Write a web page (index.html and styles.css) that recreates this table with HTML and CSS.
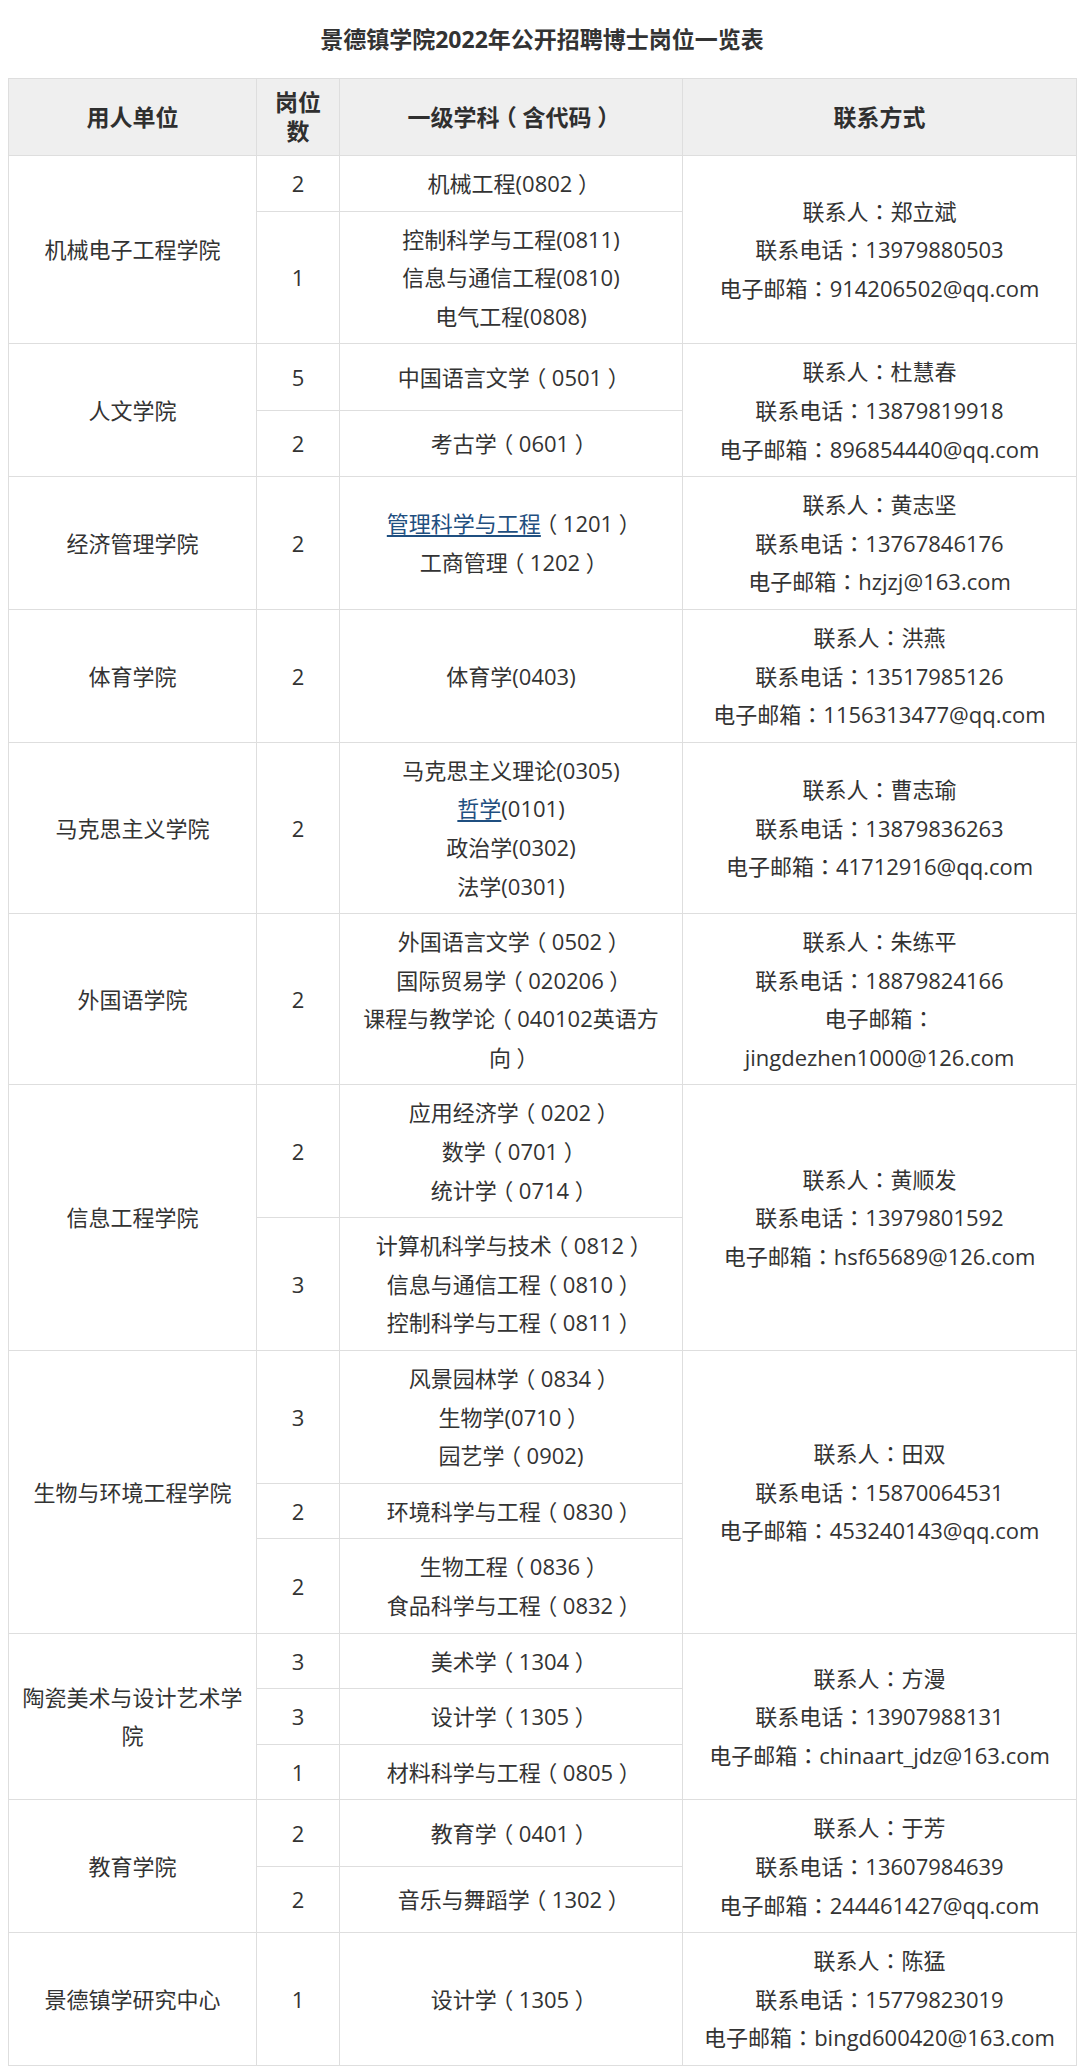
FILE: index.html
```html
<!DOCTYPE html>
<html lang="zh-CN">
<head>
<meta charset="utf-8">
<title>景德镇学院2022年公开招聘博士岗位一览表</title>
<link rel="stylesheet" href="styles.css">
</head>
<body>
<div class="page">
  <h1 class="title">景德镇学院2022年公开招聘博士岗位一览表</h1>
  <table class="jobs">
    <colgroup>
      <col class="c-unit">
      <col class="c-num">
      <col class="c-subj">
      <col class="c-contact">
    </colgroup>
    <thead>
      <tr>
        <th>用人单位</th>
        <th>岗位数</th>
        <th>一级学科<span class="bk">（</span>含代码<span class="bk">）</span></th>
        <th>联系方式</th>
      </tr>
    </thead>
    <tbody>
      <tr>
        <td rowspan="2">机械电子工程学院</td>
        <td>2</td>
        <td>机械工程(0802<span class="bk">）</span></td>
        <td rowspan="2">联系人<span class="cl" lang="zh-TW">：</span>郑立斌<br>联系电话<span class="cl" lang="zh-TW">：</span>13979880503<br>电子邮箱<span class="cl" lang="zh-TW">：</span>914206502@qq.com</td>
      </tr>
      <tr>
        <td>1</td>
        <td>控制科学与工程(0811)<br>信息与通信工程(0810)<br>电气工程(0808)</td>
      </tr>

      <tr>
        <td rowspan="2">人文学院</td>
        <td>5</td>
        <td>中国语言文学<span class="bk">（</span>0501<span class="bk">）</span></td>
        <td rowspan="2">联系人<span class="cl" lang="zh-TW">：</span>杜慧春<br>联系电话<span class="cl" lang="zh-TW">：</span>13879819918<br>电子邮箱<span class="cl" lang="zh-TW">：</span>896854440@qq.com</td>
      </tr>
      <tr>
        <td>2</td>
        <td>考古学<span class="bk">（</span>0601<span class="bk">）</span></td>
      </tr>

      <tr>
        <td>经济管理学院</td>
        <td>2</td>
        <td><a class="link" href="#">管理科学与工程</a><span class="bk">（</span>1201<span class="bk">）</span><br>工商管理<span class="bk">（</span>1202<span class="bk">）</span></td>
        <td>联系人<span class="cl" lang="zh-TW">：</span>黄志坚<br>联系电话<span class="cl" lang="zh-TW">：</span>13767846176<br>电子邮箱<span class="cl" lang="zh-TW">：</span>hzjzj@163.com</td>
      </tr>

      <tr>
        <td>体育学院</td>
        <td>2</td>
        <td>体育学(0403)</td>
        <td>联系人<span class="cl" lang="zh-TW">：</span>洪燕<br>联系电话<span class="cl" lang="zh-TW">：</span>13517985126<br>电子邮箱<span class="cl" lang="zh-TW">：</span>1156313477@qq.com</td>
      </tr>

      <tr>
        <td>马克思主义学院</td>
        <td>2</td>
        <td>马克思主义理论(0305)<br><a class="link" href="#">哲学</a>(0101)<br>政治学(0302)<br>法学(0301)</td>
        <td>联系人<span class="cl" lang="zh-TW">：</span>曹志瑜<br>联系电话<span class="cl" lang="zh-TW">：</span>13879836263<br>电子邮箱<span class="cl" lang="zh-TW">：</span>41712916@qq.com</td>
      </tr>

      <tr>
        <td>外国语学院</td>
        <td>2</td>
        <td>外国语言文学<span class="bk">（</span>0502<span class="bk">）</span><br>国际贸易学<span class="bk">（</span>020206<span class="bk">）</span><br>课程与教学论<span class="bk">（</span>040102英语方<br>向<span class="bk">）</span></td>
        <td>联系人<span class="cl" lang="zh-TW">：</span>朱练平<br>联系电话<span class="cl" lang="zh-TW">：</span>18879824166<br>电子邮箱<span class="cl" lang="zh-TW">：</span><br>jingdezhen1000@126.com</td>
      </tr>

      <tr>
        <td rowspan="2">信息工程学院</td>
        <td>2</td>
        <td>应用经济学<span class="bk">（</span>0202<span class="bk">）</span><br>数学<span class="bk">（</span>0701<span class="bk">）</span><br>统计学<span class="bk">（</span>0714<span class="bk">）</span></td>
        <td rowspan="2">联系人<span class="cl" lang="zh-TW">：</span>黄顺发<br>联系电话<span class="cl" lang="zh-TW">：</span>13979801592<br>电子邮箱<span class="cl" lang="zh-TW">：</span>hsf65689@126.com</td>
      </tr>
      <tr>
        <td>3</td>
        <td>计算机科学与技术<span class="bk">（</span>0812<span class="bk">）</span><br>信息与通信工程<span class="bk">（</span>0810<span class="bk">）</span><br>控制科学与工程<span class="bk">（</span>0811<span class="bk">）</span></td>
      </tr>

      <tr>
        <td rowspan="3">生物与环境工程学院</td>
        <td>3</td>
        <td>风景园林学<span class="bk">（</span>0834<span class="bk">）</span><br>生物学(0710<span class="bk">）</span><br>园艺学<span class="bk">（</span>0902)</td>
        <td rowspan="3">联系人<span class="cl" lang="zh-TW">：</span>田双<br>联系电话<span class="cl" lang="zh-TW">：</span>15870064531<br>电子邮箱<span class="cl" lang="zh-TW">：</span>453240143@qq.com</td>
      </tr>
      <tr>
        <td>2</td>
        <td>环境科学与工程<span class="bk">（</span>0830<span class="bk">）</span></td>
      </tr>
      <tr>
        <td>2</td>
        <td>生物工程<span class="bk">（</span>0836<span class="bk">）</span><br>食品科学与工程<span class="bk">（</span>0832<span class="bk">）</span></td>
      </tr>

      <tr>
        <td rowspan="3">陶瓷美术与设计艺术学<br>院</td>
        <td>3</td>
        <td>美术学<span class="bk">（</span>1304<span class="bk">）</span></td>
        <td rowspan="3">联系人<span class="cl" lang="zh-TW">：</span>方漫<br>联系电话<span class="cl" lang="zh-TW">：</span>13907988131<br>电子邮箱<span class="cl" lang="zh-TW">：</span>chinaart_jdz@163.com</td>
      </tr>
      <tr>
        <td>3</td>
        <td>设计学<span class="bk">（</span>1305<span class="bk">）</span></td>
      </tr>
      <tr>
        <td>1</td>
        <td>材料科学与工程<span class="bk">（</span>0805<span class="bk">）</span></td>
      </tr>

      <tr>
        <td rowspan="2">教育学院</td>
        <td>2</td>
        <td>教育学<span class="bk">（</span>0401<span class="bk">）</span></td>
        <td rowspan="2">联系人<span class="cl" lang="zh-TW">：</span>于芳<br>联系电话<span class="cl" lang="zh-TW">：</span>13607984639<br>电子邮箱<span class="cl" lang="zh-TW">：</span>244461427@qq.com</td>
      </tr>
      <tr>
        <td>2</td>
        <td>音乐与舞蹈学<span class="bk">（</span>1302<span class="bk">）</span></td>
      </tr>

      <tr>
        <td>景德镇学研究中心</td>
        <td>1</td>
        <td>设计学<span class="bk">（</span>1305<span class="bk">）</span></td>
        <td>联系人<span class="cl" lang="zh-TW">：</span>陈猛<br>联系电话<span class="cl" lang="zh-TW">：</span>15779823019<br>电子邮箱<span class="cl" lang="zh-TW">：</span>bingd600420@163.com</td>
      </tr>
    </tbody>
  </table>
</div>
</body>
</html>
```

FILE: styles.css
```css
html, body {
  margin: 0;
  padding: 0;
  background: #ffffff;
}

body {
  font-family: "Open Sans", "Noto Sans CJK SC", sans-serif;
  color: #333333;
}

.page {
  width: 1068px;
  padding: 0 4px 0 8px;
}

.title {
  margin: 0;
  padding: 19px 0 19px;
  font-size: 23px;
  line-height: 40px;
  font-weight: 700;
  text-align: center;
  color: #333333;
}

.jobs {
  width: 1068px;
  table-layout: fixed;
  border-collapse: collapse;
}

.c-unit { width: 248px; }
.c-num { width: 83px; }
.c-subj { width: 343px; }
.c-contact { width: 394px; }

.jobs th,
.jobs td {
  border: 1px solid #dedede;
  text-align: center;
  vertical-align: middle;
}

.jobs th {
  background: #efefef;
  font-size: 23px;
  line-height: 29px;
  font-weight: 700;
  padding: 9px 10px;
  color: #2f2f2f;
}

.jobs td {
  font-size: 22px;
  line-height: 38.6px;
  padding: 8px 6px;
  color: #333333;
}

/* full-width colon drawn centred in its em box */
.cl {
  font-family: "Noto Sans CJK TC", "Noto Sans CJK SC", sans-serif;
  line-height: 1;
}

/* full-width brackets drawn centred in their em box */
.bk {
  font-family: "Noto Sans CJK SC", sans-serif;
  font-feature-settings: "halt" 1;
  line-height: 1;
  margin: 0 0.25em;
}

.link {
  color: #1f4f80;
  text-decoration: underline;
  text-underline-offset: 3px;
}
```
